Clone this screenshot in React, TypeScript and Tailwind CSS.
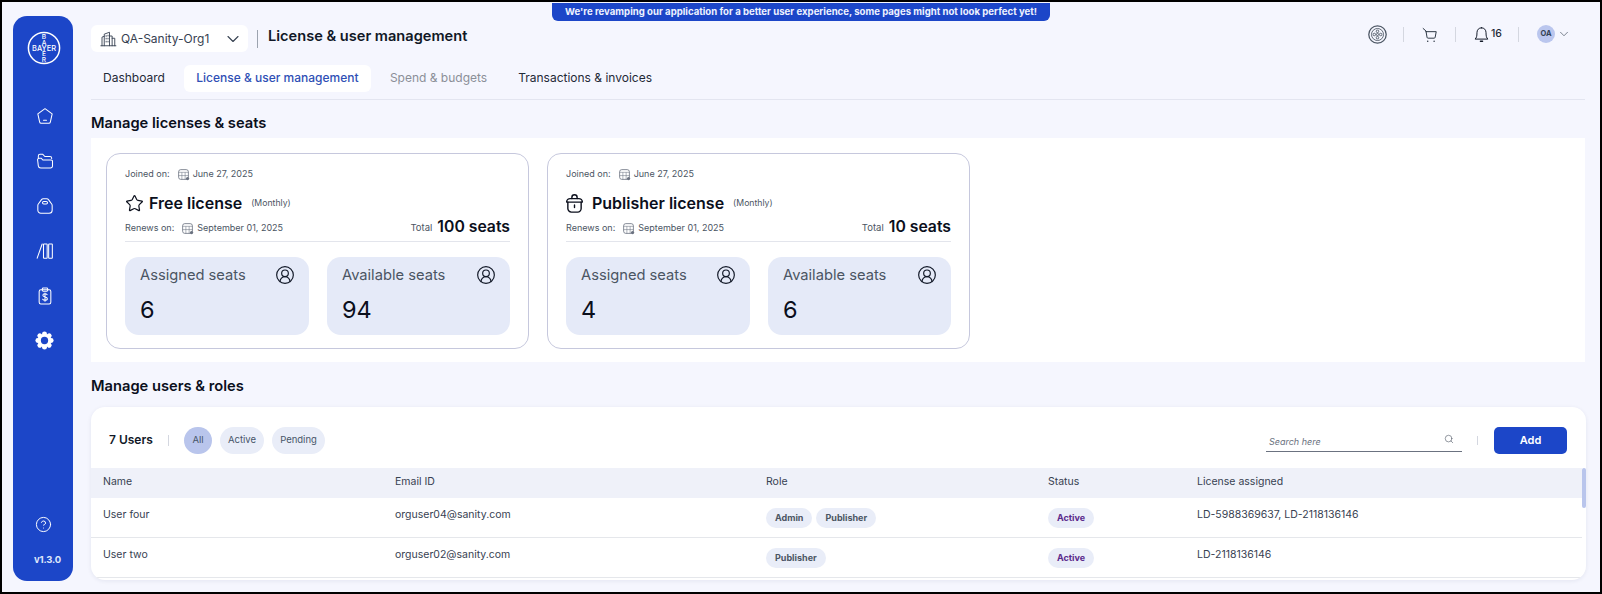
import React from "react";
import { ChevronDown, CircleHelp, CircleUserRound, Search, Star } from "lucide-react";

const FONT = "font-['Inter','Liberation_Sans',sans-serif]";

/** Stroke icon wrapper so the hand drawn glyphs share the same defaults */
const Glyph: React.FC<{ size: number; className?: string; width?: number; children: React.ReactNode }> = ({
  size,
  className,
  width = 1.6,
  children,
}) => (
  <svg
    width={size}
    height={size}
    viewBox="0 0 24 24"
    fill="none"
    stroke="currentColor"
    strokeWidth={width}
    strokeLinecap="round"
    strokeLinejoin="round"
    className={className}
  >
    {children}
  </svg>
);

const BayerLogo = () => (
  <svg width="34" height="34" viewBox="0 0 34 34" fill="none" className="shrink-0">
    <circle cx="17" cy="17" r="15.6" stroke="white" strokeWidth="1.5" />
    <text x="17" y="19.6" textAnchor="middle" fill="white" fontSize="7.4" fontWeight="500" fontFamily="Inter">
      BAYER
    </text>
    {[
      ["B", 8.4],
      ["A", 13.9],
      ["E", 25.4],
      ["R", 31],
    ].map(([c, y]) => (
      <text key={c} x="17" y={y} textAnchor="middle" fill="white" fontSize="6.6" fontWeight="500" fontFamily="Inter">
        {c}
      </text>
    ))}
  </svg>
);

const navIcons: React.ReactNode[] = [
  <>
    <path d="M12 3.2 20.6 9.4 18.4 19.4a1.8 1.8 0 0 1-1.8 1.4H7.4a1.8 1.8 0 0 1-1.8-1.4L3.4 9.4Z" />
    <path d="M10.2 17h3.6" />
  </>,
  <>
    <path d="M4 8V6a2 2 0 0 1 2-2h3.4l2.4 2.6H18a2 2 0 0 1 2 2V9" />
    <path d="M3.2 11.4A2 2 0 0 1 5 8.6h2.4l2 2.2H19.4a1.6 1.6 0 0 1 1.6 1.6V18a2.4 2.4 0 0 1-2.4 2.4H7a3 3 0 0 1-3-2.6Z" />
  </>,
  <>
    <path d="M7.6 4.6A3 3 0 0 1 10 3.4h4a3 3 0 0 1 2.4 1.2L20 9.6a3 3 0 0 1 .6 1.8V17a3.6 3.6 0 0 1-3.6 3.6H7A3.6 3.6 0 0 1 3.4 17v-5.6a3 3 0 0 1 .6-1.8Z" />
    <rect x="9" y="6.6" width="6" height="3" rx="1.5" />
  </>,
  <>
    <path d="M2.6 20.6 8.6 3.6" />
    <rect x="10.2" y="3.6" width="4.4" height="17" rx="0.6" />
    <rect x="16.4" y="3.6" width="4.4" height="17" rx="0.6" />
  </>,
  <>
    <rect x="5" y="4.6" width="14" height="17" rx="2" />
    <rect x="8.8" y="2.4" width="6.4" height="3.8" rx="1" />
    <path d="M14.6 10.4c-.5-.8-1.4-1.1-2.6-1.1-1.5 0-2.6.7-2.6 1.9 0 2.7 5.4 1.3 5.4 4 0 1.2-1.2 1.9-2.8 1.9-1.3 0-2.3-.4-2.8-1.2M12 8.4v10" />
  </>,
];

// eight lobes around a disc, the hole is painted in the rail colour
const Gear = () => (
  <svg width="19" height="19" viewBox="0 0 24 24" fill="white">
    <circle cx="12" cy="12" r="8.6" />
    {[0, 45, 90, 135, 180, 225, 270, 315].map((a) => (
      <circle key={a} cx="12" cy="3.6" r="3.1" transform={`rotate(${a} 12 12)`} />
    ))}
    <circle cx="12" cy="12" r="4.6" fill="#1c46c8" />
  </svg>
);

const Sidebar = () => (
  <aside className="ml-[11px] mt-[14px] mb-[11px] w-[60px] shrink-0 rounded-[14px] bg-[#1c46c8] flex flex-col items-center text-white">
    <div className="mt-[15px] mb-[41px] ml-[1px]">
      <BayerLogo />
    </div>
    <div className="ml-[3px] flex flex-col items-center gap-[25px]">
      {navIcons.map((icon, i) => (
        <Glyph key={i} size={20} width={1.25}>
          {icon}
        </Glyph>
      ))}
      <Gear />
    </div>
    <div className="mt-auto flex flex-col items-center">
      <CircleHelp size={17} strokeWidth={1.4} className="mb-[21px]" />
      <span className="ml-[9px] text-[9.5px] leading-[12px] font-bold tracking-[-0.2px] text-[#dfe6fb] mb-[15px]">
        v1.3.0
      </span>
    </div>
  </aside>
);

const Calendar = () => (
  <svg width="13" height="13" viewBox="0 0 24 24" fill="none" stroke="#6b7280" strokeWidth="1.5" className="shrink-0">
    <rect x="3" y="3" width="18" height="18" rx="4" />
    <path d="M3 8h18M9 8v13M15 8v13M3 14h18" strokeWidth="1" />
    <circle cx="19.5" cy="19.5" r="3" fill="#6b7280" stroke="none" />
  </svg>
);

const Stat: React.FC<{ label: string; value: number; width: string }> = ({ label, value, width }) => (
  <div className={`${width} h-[78px] rounded-[14px] bg-[#e5eaf8] pl-[15px] pr-[14px] pt-[8px]`}>
    <div className="flex items-center justify-between">
      <span className="text-[14.7px] leading-[18px] text-[#4b5563]">{label}</span>
      <CircleUserRound size={20} strokeWidth={1.4} className="text-[#111827]" />
    </div>
    <div className="mt-[10px] text-[23.5px] leading-[30px] text-[#0b0f1c]">{value}</div>
  </div>
);

const PublisherIcon = () => (
  <Glyph size={21} width={1.6} className="shrink-0 -ml-[2px] mr-[7px] text-[#0b0f1c]">
    <path d="M9 6.4V5a3 3 0 0 1 6 0v1.4" />
    <path d="M3 10.4c0-2.2 2-4 4-4h10c2 0 4 1.8 4 4Z" />
    <path d="M4.4 10.4v7.4a4 4 0 0 0 4 4h7.2a4 4 0 0 0 4-4v-7.4" />
    <path d="M12 13.6v3" />
  </Glyph>
);

const LicenseCard: React.FC<{
  icon: React.ReactNode;
  name: string;
  seats: number;
  assigned: number;
  available: number;
}> = ({ icon, name, seats, assigned, available }) => (
  <div className="w-[423px] h-[196px] rounded-[14px] border border-[#c6c8dd] bg-white pl-[18px] pr-[18px] pt-[14px]">
    <div className="flex items-center h-[12px] text-[9px] text-[#4b5563]">
      <span className="mr-[7px]">Joined on:</span>
      <Calendar />
      <span className="ml-[3px]">June 27, 2025</span>
    </div>
    <div className="mt-[11px] flex items-center h-[24px]">
      {icon}
      <span className="text-[16px] font-semibold text-[#0b0f1c]">{name}</span>
      <span className="ml-[9px] mt-[2px] text-[8.7px] text-[#4b5563]">(Monthly)</span>
    </div>
    <div className="flex items-center justify-between h-[27px] border-b border-[#e3e5ec]">
      <div className="flex items-center text-[9px] text-[#4b5563]">
        <span className="mr-[7px]">Renews on:</span>
        <Calendar />
        <span className="ml-[3px]">September 01, 2025</span>
      </div>
      <div className="flex items-center -mt-[3px]">
        <span className="mr-[5px] mt-[3px] text-[9.5px] text-[#4b5563]">Total</span>
        <span className="text-[15.75px] font-semibold text-[#0b0f1c]">{seats} seats</span>
      </div>
    </div>
    <div className="mt-[15px] flex justify-between">
      <Stat label="Assigned seats" value={assigned} width="w-[184px]" />
      <Stat label="Available seats" value={available} width="w-[183px]" />
    </div>
  </div>
);

const Chip: React.FC<{ children: React.ReactNode; active?: boolean; width: string }> = ({ children, active, width }) => (
  <span
    className={`${width} h-[27px] rounded-full flex items-center justify-center text-[9.5px] text-[#475569] ${
      active ? "bg-[#b9c5ec]" : "bg-[#e9edf8]"
    }`}
  >
    {children}
  </span>
);

const Tag: React.FC<{ children: React.ReactNode; active?: boolean }> = ({ children, active }) => (
  <span
    className={`h-[20px] px-[9px] rounded-full bg-[#e9edf8] flex items-center text-[9px] font-bold ${
      active ? "text-[#5b2a8c]" : "text-[#4b5563]"
    }`}
  >
    {children}
  </span>
);

const COLS = "grid grid-cols-[292px_371px_282px_149px_1fr] items-center pl-[12px]";

const users = [
  {
    name: "User four",
    email: "orguser04@sanity.com",
    roles: ["Admin", "Publisher"],
    license: "LD-5988369637, LD-2118136146",
  },
  { name: "User two", email: "orguser02@sanity.com", roles: ["Publisher"], license: "LD-2118136146" },
];

const HeaderRule = () => <span className="block h-[15px] w-px bg-[#d4d7e0]" />;

const TopBar = () => (
  <div className="flex items-center h-[27px] mt-[9px]">
    <div className="w-[157px] h-[27px] rounded-[6px] bg-white flex items-center pl-[8px] pr-[5px] text-[#374151]">
      <Glyph size={18} width={1.2} className="shrink-0">
        <path d="M7 21V5.5L14 3v18M14 8h3.5v13M4 21V9.5L7 8.4M17.5 11H21v10M2.5 21h20M9.5 7.5v1M12 7v1M9.5 11v1M12 11v1M9.5 15v1M12 15v1" />
      </Glyph>
      <span className="ml-[4px] text-[12px] text-[#374151]">QA-Sanity-Org1</span>
      <ChevronDown size={20} strokeWidth={1.3} className="ml-auto" />
    </div>
    <span className="ml-[9px] h-[18px] w-px bg-[#9ca3af]" />
    <h1 className="ml-[10px] mb-[3px] text-[14.6px] font-semibold text-[#111827]">License &amp; user management</h1>
    <div className="ml-auto mr-[14px] -mt-[9px] flex items-center text-[#374151]">
      <svg width="19" height="19" viewBox="0 0 24 24" fill="none" stroke="#4b5563" strokeWidth="1.1">
        <circle cx="12" cy="12" r="11" strokeWidth="1.6" />
        <circle cx="12" cy="12" r="7.6" />
        <circle cx="12" cy="8" r="1.6" />
        <circle cx="12" cy="16" r="1.6" />
        <circle cx="8" cy="12" r="1.6" />
        <circle cx="16" cy="12" r="1.6" />
        <circle cx="12" cy="12" r="1.4" />
      </svg>
      <span className="ml-[16px] mr-[17px]">
        <HeaderRule />
      </span>
      <Glyph size={17} width={1.3} className="text-[#1f2937]">
        <path d="M3 3.5 7 7l1.5 9a1.5 1.5 0 0 0 1.5 1.2h8.5a1.5 1.5 0 0 0 1.5-1.2L21.5 8H7" />
        <path d="M9.5 21.5h.01M18.5 21.5h.01" strokeWidth="2" />
      </Glyph>
      <span className="ml-[17px] mr-[17px]">
        <HeaderRule />
      </span>
      <Glyph size={17} width={1.4} className="text-[#111827]">
        <path d="M12 2.5c-4 0-6.4 3-6.4 7 0 5-.6 7-2.6 9h18c-2-2-2.6-4-2.6-9 0-4-2.4-7-6.4-7Z" />
        <path d="M10.5 21.5h3" strokeWidth="2" />
      </Glyph>
      <span className="ml-[1px] text-[10.5px] font-medium text-[#1f2937] w-[14px]">16</span>
      <span className="ml-[13px] mr-[18px]">
        <HeaderRule />
      </span>
      <span className="w-[18px] h-[18px] rounded-full bg-[#bac6ee] text-[7.5px] font-bold text-[#334155] flex items-center justify-center">
        OA
      </span>
      <ChevronDown size={14} strokeWidth={1.1} className="ml-[2px]" />
    </div>
  </div>
);

const Tabs = () => (
  <div className="mt-[13px] h-[35px] mr-[15px] border-b border-[#e3e5f0] flex items-start text-[12px]">
    <span className="h-[27px] pb-[1px] flex items-center pl-[12px] pr-[19px] text-[#1f2937]">Dashboard</span>
    <span className="h-[27px] pb-[1px] w-[187px] flex items-center justify-center rounded-[6px] bg-white font-medium text-[#2f4fb5]">
      License &amp; user management
    </span>
    <span className="h-[27px] pb-[1px] flex items-center ml-[19px] text-[#8b8f98]">Spend &amp; budgets</span>
    <span className="h-[27px] pb-[1px] flex items-center ml-[31px] text-[#1f2937]">Transactions &amp; invoices</span>
  </div>
);

const UsersPanel = () => (
  <div className="mt-[11px] w-[1495px] h-[173px] rounded-[14px] bg-white shadow-[0_1px_4px_rgba(30,40,90,0.08)] overflow-hidden relative">
    <div className="h-[61px] flex items-center pl-[18px] pr-[19px] pt-[6px]">
      <span className="text-[12px] font-semibold text-[#111827] w-[56px] shrink-0 -mt-[1px]">7 Users</span>
      <span className="h-[11px] w-px bg-[#d4d7e0] ml-[3px]" />
      <div className="ml-[15px] flex gap-[8px]">
        <Chip active width="w-[28px]">
          All
        </Chip>
        <Chip width="w-[44px]">Active</Chip>
        <Chip width="w-[53px]">Pending</Chip>
      </div>
      <div className="ml-auto mb-[2px] w-[196px] h-[24px] border-b border-[#6b7280] flex items-center justify-between pl-[3px] pr-[8px]">
        <span className="text-[9px] italic text-[#6b7280] mt-[5px]">Search here</span>
        <Search size={10} strokeWidth={1.4} className="text-[#4b5563]" />
      </div>
      <span className="h-[9px] w-px bg-[#d4d7e0] ml-[15px]" />
      <span className="ml-[16px] w-[73px] h-[27px] rounded-[5px] bg-[#1c46c8] text-white text-[11px] font-semibold flex items-center justify-center">
        Add
      </span>
    </div>
    <div className={`${COLS} h-[30px] pb-[2px] mr-[4px] bg-[#eff1f9] text-[10.5px] text-[#374151]`}>
      <span>Name</span>
      <span>Email ID</span>
      <span>Role</span>
      <span>Status</span>
      <span>License assigned</span>
    </div>
    {users.map((u) => (
      <div key={u.email} className={`${COLS} h-[40px] mr-[4px] border-b border-[#e5e7eb] text-[10.5px] text-[#374151]`}>
        <span className="-mt-[6px]">{u.name}</span>
        <span className="-mt-[6px]">{u.email}</span>
        <div className="flex gap-[4px]">
          {u.roles.map((r) => (
            <Tag key={r}>{r}</Tag>
          ))}
        </div>
        <div className="flex">
          <Tag active>Active</Tag>
        </div>
        <span className="-mt-[6px]">{u.license}</span>
      </div>
    ))}
    <div className="absolute right-0 top-[61px] w-[4px] h-[40px] rounded-full bg-[#b9c5ec]" />
  </div>
);

export default function App() {
  return (
    <div
      className={`${FONT} relative w-[1602px] h-[594px] overflow-hidden border-2 border-black bg-[#f5f6fe] flex`}
    >
      <div className="absolute top-[1px] left-[550px] w-[498px] h-[18px] rounded-b-[6px] bg-[#1c46c8] flex items-center justify-center whitespace-nowrap text-[9.6px] font-bold text-[#eef2ff]">
        We&apos;re revamping our application for a better user experience, some pages might not look perfect yet!
      </div>
      <Sidebar />
      <main className="ml-[18px] flex-1 min-w-0 flex flex-col">
        <div className="mt-[14px] mr-[15px]">
          <TopBar />
        </div>
        <Tabs />
        <h2 className="mt-[13px] h-[20px] flex items-center text-[14.7px] font-semibold text-[#0b0f1c]">
          Manage licenses &amp; seats
        </h2>
        <section className="mt-[5px] h-[224px] mr-[15px] bg-white pl-[15px] pt-[15px] flex gap-[18px]">
          <LicenseCard
            icon={<Star size={19} strokeWidth={1.5} className="shrink-0 mr-[5px] text-[#0b0f1c]" />}
            name="Free license"
            seats={100}
            assigned={6}
            available={94}
          />
          <LicenseCard icon={<PublisherIcon />} name="Publisher license" seats={10} assigned={4} available={6} />
        </section>
        <h2 className="mt-[14px] h-[20px] flex items-center text-[14.7px] font-semibold text-[#0b0f1c]">
          Manage users &amp; roles
        </h2>
        <UsersPanel />
      </main>
    </div>
  );
}
